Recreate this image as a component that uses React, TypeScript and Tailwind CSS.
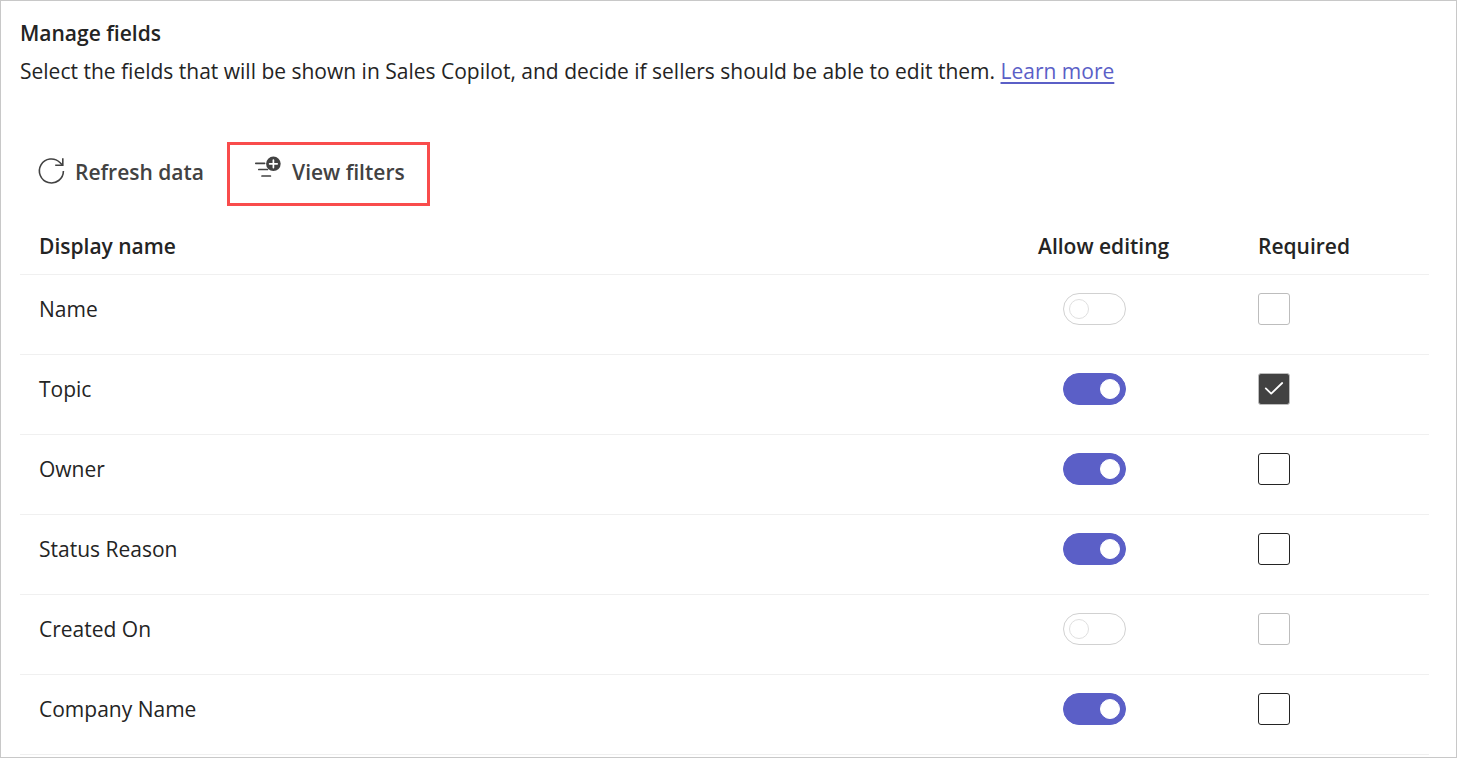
import { useState } from "react";

type Field = { name: string; editable: boolean; required: boolean; locked: boolean };

const initialFields: Field[] = [
  { name: "Name", editable: false, required: false, locked: true },
  { name: "Topic", editable: true, required: true, locked: false },
  { name: "Owner", editable: true, required: false, locked: false },
  { name: "Status Reason", editable: true, required: false, locked: false },
  { name: "Created On", editable: false, required: false, locked: true },
  { name: "Company Name", editable: true, required: false, locked: false },
];

function RefreshIcon() {
  return (
    <svg className="mb-0.5 h-7 w-7 shrink-0" viewBox="0 0 28 28" fill="none" stroke="#424242" strokeWidth="1.6" aria-hidden="true">
      <path d="M26.4 14A12 12 0 1 1 22.9 5.5L25.6 8.2" />
      <path d="M25.8 1.2V8.2H18.2" />
    </svg>
  );
}

function FilterAddIcon() {
  return (
    <svg className="mb-1.5 h-7 w-7 shrink-0" viewBox="0 0 28 28" fill="none" aria-hidden="true">
      <path d="M1.8 8.3H10.6M4.8 14.5H13.4M8 21H16.4" stroke="#424242" strokeWidth="1.7" strokeLinecap="round" />
      <circle cx="19.4" cy="8.8" r="7.3" fill="#424242" />
      <path d="M19.4 5V12.6M15.6 8.8H23.2" stroke="#fff" strokeWidth="1.7" strokeLinecap="round" />
    </svg>
  );
}

function Toggle({ label, checked, disabled, onChange }: { label: string; checked: boolean; disabled: boolean; onChange: () => void }) {
  return (
    <input
      type="checkbox"
      role="switch"
      aria-label={label}
      checked={checked}
      disabled={disabled}
      onChange={onChange}
      className="flex h-8 w-[63px] appearance-none items-center rounded-full border border-[#616161] bg-white px-[5px] before:h-5 before:w-5 before:rounded-full before:border before:border-[#616161] before:bg-white checked:justify-end checked:border-[#5b5fc7] checked:bg-[#5b5fc7] checked:before:border-white disabled:border-[#d1d1d1] disabled:before:border-[#e0e0e0]"
    />
  );
}

function Tick({ label, checked, disabled, onChange }: { label: string; checked: boolean; disabled: boolean; onChange: () => void }) {
  return (
    <span className="grid h-8 w-8">
      <input
        type="checkbox"
        aria-label={label}
        checked={checked}
        disabled={disabled}
        onChange={onChange}
        className="col-start-1 row-start-1 h-8 w-8 appearance-none rounded-[3px] border border-[#242424] bg-white checked:border-[#bdbdbd] checked:bg-[#424242] disabled:border-[#bdbdbd]"
      />
      {checked && (
        <svg className="pointer-events-none col-start-1 row-start-1 h-8 w-8" viewBox="0 0 32 32" fill="none" stroke="#fff" strokeWidth="1.8" strokeLinecap="round" strokeLinejoin="round" aria-hidden="true">
          <path d="M7.8 15.4L13.2 20.6L24.2 10" />
        </svg>
      )}
    </span>
  );
}

export default function App() {
  const [fields, setFields] = useState(initialFields);
  const toggle = (name: string, key: "editable" | "required") =>
    setFields((list) => list.map((f) => (f.name === name ? { ...f, [key]: !f[key] } : f)));

  return (
    <main className="min-h-screen border border-[#c8c8c8] bg-white pr-[27px] pl-[19px] font-['Open_Sans','Noto_Sans',sans-serif] text-[21px] leading-8 text-[#242424]">
      <h1 className="pt-4 font-semibold">Manage fields</h1>
      <p className="pt-1.5">
        Select the fields that will be shown in Sales Copilot, and decide if sellers should be able to edit them.{" "}
        <a href="#learn-more" className="text-[#5b5fc7] underline decoration-2 underline-offset-3">
          Learn more
        </a>
      </p>

      <div className="mt-[55px] flex items-center gap-[23px] pl-[17px] font-semibold text-[#424242]">
        <button type="button" className="flex h-16 items-center gap-2.5 pb-1">
          <RefreshIcon />
          Refresh data
        </button>
        <button type="button" className="flex h-16 items-center gap-2.5 border-3 border-[#f94c4c] pr-[22px] pb-1 pl-6">
          <FilterAddIcon />
          View filters
        </button>
      </div>

      <table className="mt-6 w-full table-fixed border-separate border-spacing-0 text-left">
        <colgroup>
          <col />
          <col className="w-[220px]" />
          <col className="w-[171px]" />
        </colgroup>
        <thead>
          <tr>
            <th scope="col" className="border-b border-[#f0f0f0] pb-3 pl-[19px] font-semibold">Display name</th>
            <th scope="col" className="border-b border-[#f0f0f0] pb-3 font-semibold">Allow editing</th>
            <th scope="col" className="border-b border-[#f0f0f0] pb-3 font-semibold">Required</th>
          </tr>
        </thead>
        <tbody>
          {fields.map((f) => (
            <tr key={f.name} className="align-top">
              <td className="h-20 border-b border-[#f0f0f0] pt-[18px] pl-[19px]">{f.name}</td>
              <td className="border-b border-[#f0f0f0] pt-[18px] pl-[25px]">
                <Toggle label={`Allow editing ${f.name}`} checked={f.editable} disabled={f.locked} onChange={() => toggle(f.name, "editable")} />
              </td>
              <td className="border-b border-[#f0f0f0] pt-[18px]">
                <Tick label={`${f.name} required`} checked={f.required} disabled={f.locked} onChange={() => toggle(f.name, "required")} />
              </td>
            </tr>
          ))}
        </tbody>
      </table>
    </main>
  );
}
